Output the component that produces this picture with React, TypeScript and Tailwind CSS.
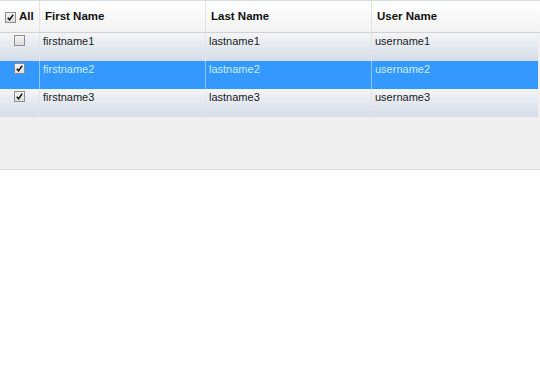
import { useState } from "react";

type User = { id: number; first: string; last: string; user: string };

const USERS: User[] = [
  { id: 1, first: "firstname1", last: "lastname1", user: "username1" },
  { id: 2, first: "firstname2", last: "lastname2", user: "username2" },
  { id: 3, first: "firstname3", last: "lastname3", user: "username3" },
];

function Check({ checked }: { checked: boolean }) {
  return (
    <span className="flex h-[11px] w-[11px] items-center justify-center border border-[#8f8f8f] bg-gradient-to-b from-[#f4f4f4] to-[#dcdcdc]">
      {checked && (
        <svg viewBox="0 0 10 10" className="h-[9px] w-[9px]">
          <path d="M2 5.2 L4 7.5 L8 1.8" fill="none" stroke="#111" strokeWidth="1.6" />
        </svg>
      )}
    </span>
  );
}

export default function App() {
  const [checked] = useState<Record<number, boolean>>({ 1: false, 2: true, 3: true });
  const selected = 2;

  return (
    <div className="h-[369px] w-[540px] bg-white font-['Liberation_Sans',Arial,sans-serif] text-[11px]">
      <div className="flex h-[170px] flex-col border-t border-b border-[#d6dce3] bg-[#efefef]">
        {/* header */}
        <div className="grid h-[32px] grid-cols-[40px_166px_166px_1fr] border-b border-[#d2d2d2] bg-gradient-to-b from-white to-[#f3f3f3] text-[11.5px] font-bold text-[#111]">
          <div className="flex items-center gap-[3px] border-r border-[#e2e2e2] pl-[5px] pt-[1px]">
            <Check checked />
            <span>All</span>
          </div>
          <div className="flex items-center border-r border-[#e2e2e2] pl-[5px] pt-[1px]">First Name</div>
          <div className="flex items-center border-r border-[#e2e2e2] pl-[5px] pt-[1px]">Last Name</div>
          <div className="flex items-center pl-[5px] pt-[1px]">User Name</div>
        </div>

        {/* rows */}
        <div className="mr-[2px]">
          {USERS.map((u) => {
            const sel = u.id === selected;
            return (
              <div
                key={u.id}
                className={
                  sel
                    ? "grid h-[28px] grid-cols-[40px_166px_166px_1fr] bg-[#3399ff] text-[#c8eeff]"
                    : "grid h-[28px] grid-cols-[40px_166px_166px_1fr] bg-gradient-to-b from-[#f3f5f8] to-[#d5dce7] text-[#222]"
                }
              >
                <div className={sel ? "flex justify-center border-r border-[#8ec5ff] pt-[2px]" : "flex justify-center border-r border-[#e1e6ed] pt-[2px]"}>
                  <Check checked={checked[u.id]} />
                </div>
                <div className={sel ? "border-r border-[#8ec5ff] pl-[3px]" : "border-r border-[#e1e6ed] pl-[3px]"}>{u.first}</div>
                <div className={sel ? "border-r border-[#8ec5ff] pl-[3px]" : "border-r border-[#e1e6ed] pl-[3px]"}>{u.last}</div>
                <div className="pl-[3px]">{u.user}</div>
              </div>
            );
          })}
        </div>
      </div>
    </div>
  );
}
